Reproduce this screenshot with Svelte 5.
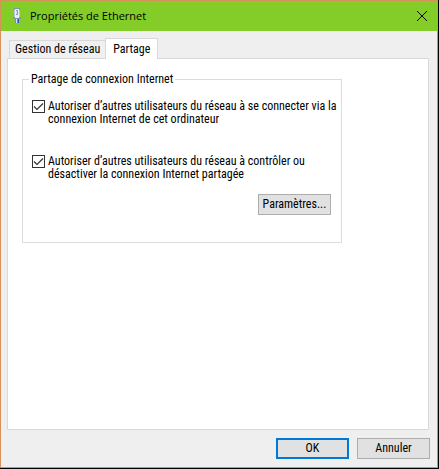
<script>
  let activeTab = $state('partage')
  let allowConnect = $state(true)
  let allowControl = $state(true)

  const tabs = [
    { id: 'reseau', label: 'Gestion de réseau' },
    { id: 'partage', label: 'Partage' }
  ]
</script>

{#snippet tick()}
  <svg class="tick" viewBox="0 0 13 13" aria-hidden="true">
    <path d="M2 6.5L5 9.5L11 3.5" />
  </svg>
{/snippet}

<div class="dialog" role="dialog" aria-labelledby="dialog-title">
  <header class="titlebar">
    <svg class="plug" viewBox="0 0 16 16" aria-hidden="true">
      <path d="M6 0H12V9H13V11H5V9H6Z" fill="#8593a8" />
      <path d="M7 1H11V10H7Z" fill="#e9eef8" />
      <path d="M6 2H7V9H6ZM11 2H12V9H11Z" fill="#b9c6dc" />
      <path d="M8 2H10V7H8Z" fill="#8d9ab0" />
      <path d="M8 3H9V6H8Z" fill="#d5deee" />
      <rect x="7" y="11" width="4" height="4" fill="#3d9fe0" />
      <rect x="8" y="11" width="1" height="4" fill="#c4eaff" />
      <rect x="10" y="11" width="1" height="4" fill="#1c66b0" />
    </svg>
    <h1 id="dialog-title">Propriétés de Ethernet</h1>
    <button class="close" type="button" aria-label="Fermer">
      <svg viewBox="0 0 10 10" aria-hidden="true">
        <path d="M0 0L10 10M10 0L0 10" />
      </svg>
    </button>
  </header>

  <div class="tabs" role="tablist">
    {#each tabs as tab}
      <button
        type="button"
        role="tab"
        class="tab"
        class:active={activeTab === tab.id}
        aria-selected={activeTab === tab.id}
        onclick={() => (activeTab = tab.id)}
      >{tab.label}</button>
    {/each}
  </div>

  <main class="panel">
    {#if activeTab === 'partage'}
      <fieldset class="group">
        <legend>Partage de connexion Internet</legend>
        <label class="option">
          <span class="box">
            <input type="checkbox" bind:checked={allowConnect} />
            {@render tick()}
          </span>
          <span>Autoriser d’autres utilisateurs du réseau à se connecter via la connexion Internet de cet ordinateur</span>
        </label>
        <label class="option">
          <span class="box">
            <input type="checkbox" bind:checked={allowControl} />
            {@render tick()}
          </span>
          <span>Autoriser d’autres utilisateurs du réseau à contrôler ou désactiver la connexion Internet partagée</span>
        </label>
        <button class="push settings" type="button">Paramètres...</button>
      </fieldset>
    {/if}
  </main>

  <footer class="actions">
    <button class="push default" type="button">OK</button>
    <button class="push" type="button">Annuler</button>
  </footer>
</div>

<style>
  :global(body) {
    background: #000;
  }

  .dialog {
    display: flex;
    flex-direction: column;
    box-sizing: border-box;
    height: calc(100vh - 1px);
    margin-right: 1px;
    border: 1px solid #d6925b;
    background: #efefef;
    color: #000;
    font-family: "Roboto Condensed", Roboto, "Liberation Sans", sans-serif;
    font-size: 12px;
    line-height: 13px;
  }

  button {
    padding: 0;
    color: inherit;
    font: inherit;
  }

  .titlebar {
    display: flex;
    align-items: center;
    height: 30px;
    padding-left: 7px;
    background: #84cd28;
  }

  .plug {
    width: 16px;
    height: 16px;
  }

  h1 {
    flex: 1;
    margin: 0 0 0 6px;
    font-family: "Open Sans", "Noto Sans", sans-serif;
    font-size: 11px;
    font-weight: 400;
    line-height: 16px;
  }

  .close {
    display: grid;
    place-items: center;
    width: 30px;
    height: 30px;
    border: 0;
    background: none;
  }

  .close svg {
    width: 10px;
    height: 10px;
    overflow: visible;
  }

  .close path {
    stroke: #000;
    stroke-width: 1;
  }

  .tabs {
    display: flex;
    align-items: flex-end;
    padding: 7px 8px 0;
  }

  .tab {
    height: 18px;
    padding: 0 5px;
    border: 1px solid #d9d9d9;
    border-width: 1px 0 0 1px;
    background: #f0f0f0;
    white-space: nowrap;
  }

  .tab.active {
    z-index: 1;
    height: 21px;
    margin-bottom: -1px;
    padding: 0 7px;
    border-width: 1px 1px 0;
    background: #fff;
  }

  .panel {
    flex: 1;
    margin: 0 8px 0 6px;
    padding: 14px;
    border: 1px solid #d9d9d9;
    background: #fff;
  }

  .group {
    display: flex;
    flex-direction: column;
    box-sizing: border-box;
    max-width: 320px;
    margin: 0;
    padding: 14px 2px 27px 9px;
    border: 1px solid #dcdcdc;
  }

  legend {
    margin-left: -3px;
    padding: 0 2px;
  }

  .option {
    display: flex;
    gap: 3px;
    margin-bottom: 29px;
  }

  .option + .option {
    margin-bottom: 13px;
  }

  .box {
    display: grid;
    flex: none;
    width: 13px;
    height: 13px;
  }

  .box > :global(*) {
    grid-area: 1 / 1;
  }

  .box input {
    appearance: none;
    width: 13px;
    height: 13px;
    margin: 0;
    border: 1px solid #333;
    background: #fff;
  }

  .tick {
    visibility: hidden;
    width: 13px;
    height: 13px;
    pointer-events: none;
  }

  .tick path {
    fill: none;
    stroke: #333;
    stroke-width: 1.2;
  }

  input:checked + .tick {
    visibility: visible;
  }

  .push {
    width: 73px;
    height: 21px;
    border: 1px solid #adadad;
    background: #e1e1e1;
  }

  .push.default {
    border: 2px solid #0078d7;
  }

  .settings {
    align-self: flex-end;
    margin-right: 8px;
  }

  .actions {
    display: flex;
    justify-content: flex-end;
    gap: 8px;
    padding: 8px 7px;
  }
</style>
